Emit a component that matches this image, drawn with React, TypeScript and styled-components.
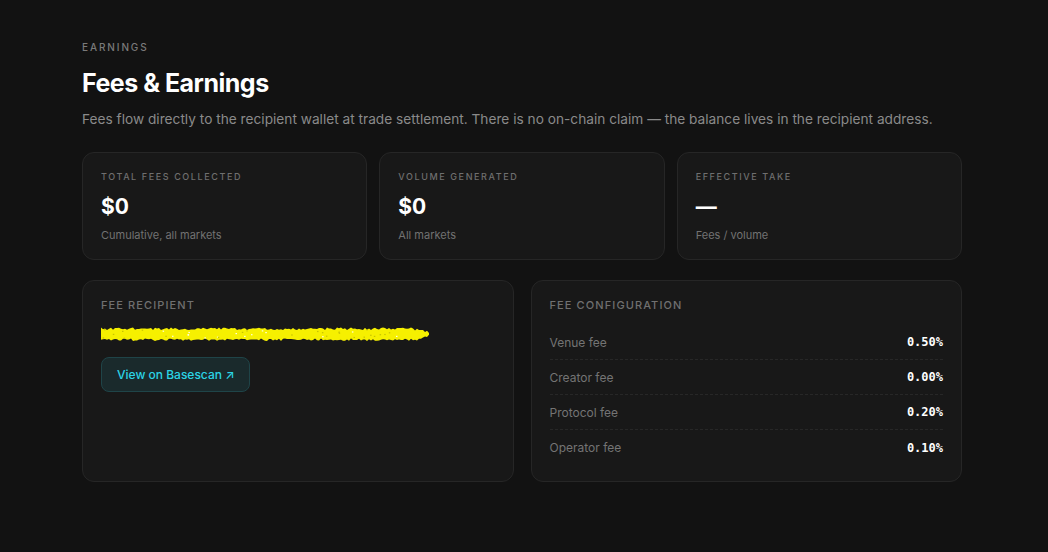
import styled, { createGlobalStyle } from 'styled-components'

const GlobalStyle = createGlobalStyle`
  html, body {
    margin: 0;
    padding: 0;
    background: #121212;
  }
  body {
    font-family: Inter, "Noto Sans", sans-serif;
    color: #f2f2f2;
    -webkit-font-smoothing: antialiased;
  }
`

const stats = [
  { label: 'Total fees collected', value: '$0', note: 'Cumulative, all markets' },
  { label: 'Volume generated', value: '$0', note: 'All markets' },
  { label: 'Effective take', value: '—', note: 'Fees / volume' },
]

const fees = [
  { name: 'Venue fee', pct: '0.50%' },
  { name: 'Creator fee', pct: '0.00%' },
  { name: 'Protocol fee', pct: '0.20%' },
  { name: 'Operator fee', pct: '0.10%' },
]

// small seeded noise so the marker stroke looks the same every run
function noise(seed: number) {
  let s = seed
  return () => {
    s = (s * 16807) % 2147483647
    return (s - 1) / 2147483646
  }
}

// rough yellow marker stroke that hides the wallet address
function Redaction() {
  const rnd = noise(42)
  const top: string[] = []
  const bottom: string[] = []
  for (let x = 0; x <= 328; x += 2) {
    const t = 1.5 + rnd() * 2.5 + (x > 310 ? (x - 310) * 0.2 : 0)
    const b = 12.5 + rnd() * 2.5 - (x > 318 ? (x - 318) * 0.4 : 0)
    top.push(`${x},${t.toFixed(1)}`)
    bottom.unshift(`${x},${b.toFixed(1)}`)
  }
  const specks = Array.from({ length: 40 }, () => ({
    x: rnd() * 325,
    y: 3 + rnd() * 9,
    light: rnd() > 0.6,
  }))
  return (
    <svg width="330" height="16" viewBox="0 0 330 16">
      <polygon points={[...top, ...bottom].join(' ')} fill="#f6f000" />
      {specks.map((p, i) => (
        <rect key={i} x={p.x.toFixed(1)} y={p.y.toFixed(1)} width="1.5" height="1.2" fill={p.light ? '#fffde0' : '#c8c400'} />
      ))}
    </svg>
  )
}

export default function App() {
  return (
    <>
      <GlobalStyle />
      <Page>
        <Eyebrow>Earnings</Eyebrow>
        <Title>Fees &amp; Earnings</Title>
        <Lead>
          Fees flow directly to the recipient wallet at trade settlement. There is no on-chain claim — the balance lives in the recipient address.
        </Lead>

        <StatGrid>
          {stats.map(s => (
            <Card key={s.label}>
              <StatLabel>{s.label}</StatLabel>
              <StatValue>{s.value}</StatValue>
              <StatNote>{s.note}</StatNote>
            </Card>
          ))}
        </StatGrid>

        <PanelGrid>
          <Panel>
            <PanelLabel>Fee recipient</PanelLabel>
            <Address>
              <Redaction />
            </Address>
            <LinkButton href="#">View on Basescan ↗</LinkButton>
          </Panel>
          <Panel>
            <PanelLabel>Fee configuration</PanelLabel>
            <FeeList>
              {fees.map(f => (
                <FeeRow key={f.name}>
                  <FeeName>{f.name}</FeeName>
                  <FeePct>{f.pct}</FeePct>
                </FeeRow>
              ))}
            </FeeList>
          </Panel>
        </PanelGrid>
      </Page>
    </>
  )
}

const Page = styled.main`
  width: 880px;
  padding: 41px 0 70px 82px;
`
const Eyebrow = styled.div`
  font-size: 10px;
  font-weight: 500;
  letter-spacing: 1.9px;
  text-transform: uppercase;
  color: #7a7a7a;
  line-height: 12px;
`
const Title = styled.h1`
  margin: 15px 0 0;
  font-size: 25px;
  font-weight: 700;
  letter-spacing: -0.5px;
  line-height: 30px;
  color: #ffffff;
`
const Lead = styled.p`
  margin: 11px 0 0;
  font-size: 13.7px;
  line-height: 20px;
  color: #8a8a8a;
`
const StatGrid = styled.div`
  display: grid;
  grid-template-columns: repeat(3, 1fr);
  gap: 12px;
  margin-top: 23px;
`
const Card = styled.div`
  background: #181818;
  border: 1px solid #262626;
  border-radius: 12px;
  padding: 18px 18px 0;
  height: 108px;
  box-sizing: border-box;
`
const StatLabel = styled.div`
  font-size: 9px;
  font-weight: 500;
  letter-spacing: 1.6px;
  text-transform: uppercase;
  color: #6f6f6f;
  line-height: 12px;
`
const StatValue = styled.div`
  margin-top: 10px;
  font-size: 21px;
  font-weight: 700;
  line-height: 28px;
  color: #ffffff;
`
const StatNote = styled.div`
  margin-top: 7px;
  font-size: 11px;
  line-height: 14px;
  color: #727272;
`
const PanelGrid = styled.div`
  display: grid;
  grid-template-columns: 1fr 1fr;
  gap: 17px;
  margin-top: 20px;
`
const Panel = styled.section`
  background: #181818;
  border: 1px solid #262626;
  border-radius: 12px;
  padding: 17px 18px 16px;
  min-height: 202px;
  box-sizing: border-box;
`
const PanelLabel = styled.div`
  font-size: 11px;
  font-weight: 500;
  letter-spacing: 1.1px;
  text-transform: uppercase;
  color: #707070;
  line-height: 14px;
`
const Address = styled.div`
  margin-top: 14px;
  height: 16px;
  line-height: 0;
`
const LinkButton = styled.a`
  display: inline-flex;
  align-items: center;
  margin-top: 15px;
  height: 35px;
  padding: 0 15px;
  box-sizing: border-box;
  border: 1px solid #1f4448;
  border-radius: 8px;
  background: #1a2a2c;
  color: #2bd4e6;
  font-size: 12px;
  font-weight: 500;
  text-decoration: none;
`
const FeeList = styled.div`
  margin-top: 13px;
  display: flex;
  flex-direction: column;
`
const FeeRow = styled.div`
  display: flex;
  justify-content: space-between;
  align-items: center;
  height: 35px;
  box-sizing: border-box;
  border-bottom: 1px dashed #272727;
  &:last-child {
    border-bottom: none;
  }
`
const FeeName = styled.span`
  font-size: 12px;
  color: #747474;
`
const FeePct = styled.span`
  font-family: "DejaVu Sans Mono", "Liberation Mono", monospace;
  font-size: 12px;
  font-weight: 700;
  color: #ffffff;
`
